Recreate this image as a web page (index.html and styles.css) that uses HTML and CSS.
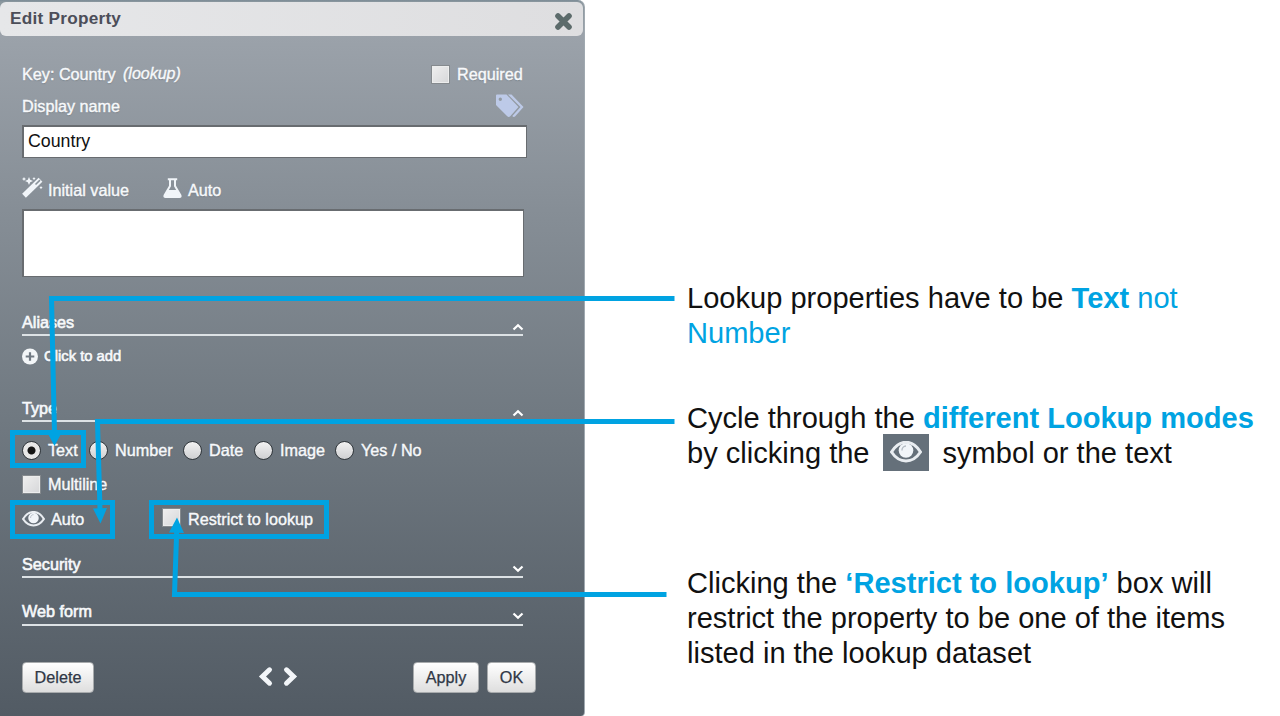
FILE: index.html
```html
<!DOCTYPE html>
<html lang="en">
<head>
<meta charset="utf-8">
<title>Edit Property</title>
<link rel="stylesheet" href="styles.css">
</head>
<body>
<svg class="defs" width="0" height="0">
  <symbol id="eye" viewBox="0 0 32 22">
    <path d="M1.500 11C9.500-2 22.500-2 30.500 11C22.500 23 9.500 23 1.500 11Z" fill="none" stroke="#e9edf1" stroke-width="3"/>
    <circle cx="16" cy="9.500" r="7.300" fill="#f1f5f9"/>
    <path d="M12 9.500a4 4 0 0 1 4-4.500" fill="none" stroke="#b4bcc4" stroke-width="1.300"/>
  </symbol>
</svg>
<main class="page">
  <section class="panel">
    <header class="title-bar">
      <h1 class="title">Edit Property</h1>
      <svg class="close" width="19" height="19" viewBox="0 0 19 19"><path d="M4 4L15 15M15 4L4 15" stroke="#5c6b6b" stroke-width="5.600" stroke-linecap="round"/></svg>
    </header>
    <div class="content">
      <div class="row key-row">
        <span class="key">Key: Country</span><em class="kind">(lookup)</em>
        <span class="check required-check"></span><span>Required</span>
      </div>
      <div class="row display-row">
        <span>Display name</span>
        <svg class="tags" width="29" height="24" viewBox="0 0 29 24">
          <path fill="#bdcae8" fill-rule="evenodd" d="M1 1.500Q1 .5 2 .5H11.500L23.500 13L15 22.500Q13.500 23.500 12 22L1 11ZM5.300 3.500A1.700 1.700 0 1 0 5.300 6.900A1.700 1.700 0 0 0 5.300 3.500Z"/>
          <path fill="#bdcae8" d="M13 .5H16.500L28.500 13L20 22.500Q18.500 23.500 17.300 22L25.500 13Z"/>
        </svg>
      </div>
      <div class="field name-field">Country</div>
      <div class="row value-row">
        <svg class="wand" width="21" height="21" viewBox="0 0 21 21">
          <path d="M2 18.800L18.500 2.800" stroke="#f1f5f9" stroke-width="5.400"/>
          <path d="M13.500 7.500L18 3.200" stroke="#89929a" stroke-width="1.600"/>
          <path d="M7 0L8.200 2.800L11 4L8.200 5.200L7 8L5.800 5.200L3 4L5.800 2.800ZM2 0l.7 1.300L4 2l-1.300.7L2 4l-.7-1.300L0 2l1.300-.7ZM12 0l.6 1 1 .6-1 .6-.6 1-.6-1-1-.6 1-.6ZM19 9l.6 1 1 .6-1 .6-.6 1-.6-1-1-.6 1-.6Z" fill="#f1f5f9"/>
        </svg>
        <span class="initial">Initial value</span>
        <svg class="flask" width="19" height="20" viewBox="0 0 19 20">
          <path d="M4.800 1.200H14.200M7 1V8L1.500 17.500Q1 19 2.500 19H16.500Q18 19 17.500 17.500L12 8V1" fill="none" stroke="#f1f5f9" stroke-width="2"/>
          <path d="M5 12H14L18 19H1Z" fill="#f1f5f9"/>
        </svg>
        <span>Auto</span>
      </div>
      <div class="field value-field"></div>
      <div class="section aliases"><span>Aliases</span><svg class="chev" width="12" height="8" viewBox="0 0 12 8"><path d="M1.500 6.500L6 2.200L10.500 6.500"/></svg></div>
      <div class="row add-row">
        <svg width="17" height="17" viewBox="0 0 17 17"><circle cx="8" cy="8.500" r="8" fill="#f3f6f8"/><path d="M8 4.200V12.800M3.700 8.500H12.300" stroke="#727b84" stroke-width="2.200"/></svg>
        <span class="add">Click to add</span>
      </div>
      <div class="section type"><span>Type</span><svg class="chev" width="12" height="8" viewBox="0 0 12 8"><path d="M1.500 6.500L6 2.200L10.500 6.500"/></svg></div>
      <div class="radios">
        <span class="option"><i class="radio on"></i>Text</span>
        <span class="option"><i class="radio"></i>Number</span>
        <span class="option"><i class="radio"></i>Date</span>
        <span class="option"><i class="radio"></i>Image</span>
        <span class="option"><i class="radio"></i>Yes / No</span>
      </div>
      <div class="row multi-row"><span class="check"></span><span>Multiline</span></div>
      <div class="row mode-row">
        <svg class="mode-eye" width="23" height="16"><use href="#eye"/></svg><span class="mode">Auto</span>
        <span class="check restrict-check"></span><span>Restrict to lookup</span>
      </div>
      <div class="section security"><span>Security</span><svg class="chev" width="12" height="8" viewBox="0 0 12 8"><path d="M1.500 1.500L6 5.800L10.500 1.500"/></svg></div>
      <div class="section web"><span>Web form</span><svg class="chev" width="12" height="8" viewBox="0 0 12 8"><path d="M1.500 1.500L6 5.800L10.500 1.500"/></svg></div>
      <footer class="actions">
        <button class="button delete">Delete</button>
        <svg class="pager" width="40" height="22" viewBox="0 0 40 22"><path d="M11.500 3.800L4.500 10.500L11.500 17.200M28.500 3.800L35.500 10.500L28.500 17.200" fill="none" stroke="#f3f6f9" stroke-width="5" stroke-linecap="round"/></svg>
        <button class="button apply">Apply</button>
        <button class="button ok">OK</button>
      </footer>
    </div>
  </section>
  <section class="notes">
    <p class="note">Lookup properties have to be <b>Text</b> <span class="blue">not</span><br><span class="blue">Number</span></p>
    <p class="note modes">Cycle through the <b>different Lookup modes</b><br><span>by clicking the</span><span class="eye-chip"><svg width="32" height="22"><use href="#eye"/></svg></span><span>symbol or the text</span></p>
    <p class="note restrict">Clicking the <b>‘Restrict to lookup’</b> box will<br>restrict the property to be one of the items<br>listed in the lookup dataset</p>
  </section>
  <svg class="callouts" width="1280" height="716" viewBox="0 0 1280 716">
    <g fill="none" stroke="#00a3e2" stroke-width="5">
      <path d="M674.500 298.500H51.500L54.500 434"/>
      <path d="M674.500 421.500H97.500L100 510"/>
      <path d="M666.500 594.500H174.500L176.700 531"/>
      <path d="M12.500 432.500H83.500V465.500H12.500ZM12.500 502.500H112.500V536.500H12.500ZM151.500 502.500H326.500V536.500H151.500Z"/>
    </g>
    <path fill="#00a3e2" d="M47 432H62L54.500 446ZM93 508.500L107 508L100.500 523.500ZM169 532.500L177 517.500L184 533Z"/>
  </svg>
</main>
</body>
</html>
```
FILE: styles.css
```css
* { box-sizing: border-box; }
body { margin: 0; background: #fff; font-family: "Liberation Sans", Arial, sans-serif; overflow: hidden; }
.defs { position: absolute; }
.page { position: relative; display: flex; width: 1280px; height: 716px; }
.panel {
  width: 585px; height: 716px; padding-top: 2px; border-right: 1px solid #a0a9b0;
  border-radius: 0 7px 4px 0;
  background: linear-gradient(#7b8b96 0, #8c989f 2px, #9ba2aa 36px, #868e96 210px, #707981 420px, #525b64 716px);
  color: #f7f9fb; font-size: 16.2px; -webkit-text-stroke: .4px currentColor;
}
.title-bar {
  display: flex; align-items: center; justify-content: space-between; height: 34px; width: 583px;
  padding: 0 10px; border-radius: 6px; background: linear-gradient(90deg, #e6e7e9, #dedee0);
}
.title { margin: -2px 0 0; font-size: 17.2px; letter-spacing: .25px; color: #4c4e59; -webkit-text-stroke: 0; }
.close { margin-top: 4px; }
.content { display: flex; flex-direction: column; width: 526px; padding: 24px 0 0 22px; }
.row, .radios, .option { display: flex; align-items: center; white-space: nowrap; text-shadow: 0 1px 1px #59626b80; }
.row { width: 514px; }
.key-row { height: 28px; }
.key { width: 94px; }
.kind { width: 58px; margin: 0 0 0 7px; font-size: 16px; }
.check {
  flex: none; width: 19px; height: 19px; margin-right: 7px; border: 1px solid #858a8e;
  background: linear-gradient(135deg, #efefef, #d6d7d9); box-shadow: inset 0 0 0 1px #eceded;
}
.required-check { margin: 0 7px 0 250px; }
.display-row { height: 28px; margin-top: 4px; }
.tags { margin-left: 375px; }
.field { border: 2px solid #686c70; border-right-width: 1px; border-bottom-width: 1px; background: #fff; color: #111; -webkit-text-stroke: 0; }
.name-field { width: 505px; height: 33px; margin-top: 5px; padding-left: 4px; font-size: 17.8px; line-height: 29px; }
.value-row { height: 34px; margin-top: 15px; }
.wand { margin: -6px 5px 0 0; }
.initial { width: 115px; }
.flask { margin: -5px 6px 0 0; }
.value-field { width: 502px; height: 68px; margin-top: 2px; }
.section {
  display: flex; justify-content: space-between; align-items: flex-end; width: 501px; height: 28px;
  padding-bottom: 3px; border-bottom: 2px solid #dde2e5; line-height: 18px; -webkit-text-stroke-width: .6px;
}
.chev { flex: none; margin-right: -1px; }
.chev path { fill: none; stroke: #fff; stroke-width: 2.2; }
.aliases { margin-top: 31px; }
.add-row { height: 20px; margin-top: 10px; }
.add { margin-left: 5px; font-size: 14.8px; -webkit-text-stroke-width: .6px; }
.type { margin-top: 28px; }
.radios { display: grid; grid-template-columns: 67px 94px 71px 81px auto; height: 24px; margin-top: 16px; }
.radio {
  flex: none; width: 19px; height: 19px; margin-right: 7px; border: 1.5px solid #30363b; border-radius: 50%;
  background: linear-gradient(#f2f2f2, #cfd0d2);
}
.radio.on { background: radial-gradient(circle, #151515 0 3.5px, #e8e8e8 4.5px); }
.multi-row { height: 24px; margin-top: 10px; }
.mode-row { height: 24px; margin-top: 11px; }
.mode-eye { margin-right: 6px; }
.mode { width: 111px; }
.restrict-check { margin-top: -3px; }
.security { margin-top: 19px; }
.web { margin-top: 20px; padding-bottom: 4px; }
.actions { display: flex; align-items: center; width: 514px; height: 32px; margin-top: 35px; }
.button {
  height: 31px; padding: 0; border: 1px solid #a8abad; border-radius: 4px; background: linear-gradient(#fff, #dedede);
  font: 16.2px "Liberation Sans", Arial, sans-serif; color: #303846; -webkit-text-stroke: .25px #303846;
}
.delete { width: 72px; }
.pager { margin-left: 164px; }
.apply { width: 66px; margin-left: 115px; }
.ok { width: 49px; margin-left: 8px; }
.notes { padding: 281px 0 0 102px; color: #111; font-size: 29.07px; line-height: 35px; white-space: nowrap; }
.note { margin: 0; }
.note b, .blue { color: #00a3e2; }
.modes { margin-top: 50px; }
.eye-chip {
  display: inline-flex; align-items: center; justify-content: center; width: 46px; height: 37px; padding-left: 1px;
  margin: -6px 14px -8px 13px; background: #65707a; vertical-align: 0;
}
.restrict { margin-top: 95px; }
.callouts { position: absolute; left: 0; top: 0; pointer-events: none; }
```
